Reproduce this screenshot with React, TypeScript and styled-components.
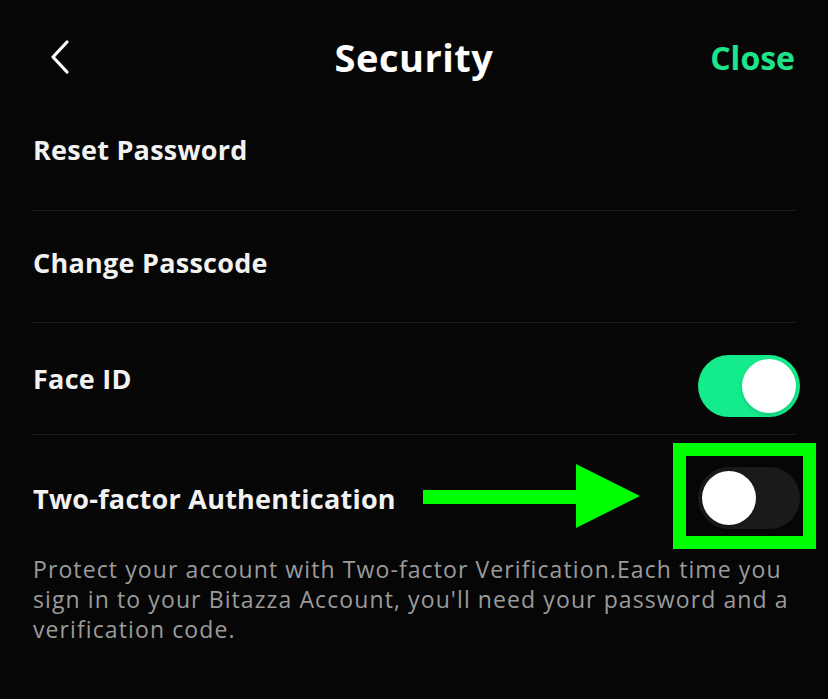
import React from "react";
import styled, { createGlobalStyle } from "styled-components";

const Global = createGlobalStyle`
  html, body { margin: 0; padding: 0; background: #060606; }
  body { font-family: "Open Sans", Lato, sans-serif; -webkit-font-smoothing: antialiased; }
`;

const Screen = styled.div`
  width: 828px;
  height: 699px;
  background: #060606;
  position: relative;
  overflow: hidden;
  color: #f4f4f4;
`;

const Header = styled.header`
  height: 98px;
  display: grid;
  grid-template-columns: 1fr auto 1fr;
  align-items: center;
  padding: 16px 33px 0 33px;
  box-sizing: border-box;
`;

const BackButton = styled.button`
  justify-self: start;
  margin-left: 17px;
  background: none;
  border: 0;
  padding: 0;
  width: 20px;
  height: 36px;
  display: flex;
  align-items: center;
  cursor: pointer;
`;

const Title = styled.h1`
  margin: 0;
  font-size: 38px;
  font-weight: 700;
  letter-spacing: 0.5px;
  color: #ffffff;
`;

const CloseLink = styled.button`
  justify-self: end;
  background: none;
  border: 0;
  padding: 0;
  font-family: inherit;
  font-size: 32px;
  font-weight: 700;
  color: #1de38b;
  cursor: pointer;
`;

const List = styled.div`
  padding: 0 32px;
`;

const Row = styled.div<{ $h: number; $last?: boolean; $pb?: number; $pt?: number }>`
  height: ${(p) => p.$h}px;
  box-sizing: border-box;
  display: flex;
  align-items: center;
  justify-content: space-between;
  padding-top: ${(p) => p.$pt ?? 0}px;
  padding-bottom: ${(p) => p.$pb ?? 0}px;
  border-bottom: ${(p) => (p.$last ? "none" : "1px solid #1b1b1b")};
`;

const RowLabel = styled.span`
  padding-left: 1px;
  font-size: 27px;
  font-weight: 700;
  letter-spacing: 0.25px;
  color: #f2f2f2;
`;

const Track = styled.div<{ $on: boolean; $shift?: number }>`
  width: 102px;
  height: 62px;
  border-radius: 31px;
  background: ${(p) => (p.$on ? "#14ec8c" : "#1a1a1a")};
  display: flex;
  align-items: center;
  justify-content: ${(p) => (p.$on ? "flex-end" : "flex-start")};
  padding: 0 4px;
  box-sizing: border-box;
  margin-right: -4px;
  margin-top: ${(p) => p.$shift ?? 0}px;
`;

const Knob = styled.div`
  width: 54px;
  height: 54px;
  border-radius: 50%;
  background: #ffffff;
  box-shadow: 0 2px 4px rgba(0, 0, 0, 0.15);
`;

const Description = styled.p`
  margin: 0;
  padding: 0 30px 0 33px;
  font-size: 23px;
  line-height: 30px;
  letter-spacing: 1.1px;
  color: #9b9b9b;
  font-weight: 400;
`;

const Highlight = styled.div`
  position: absolute;
  left: 673px;
  top: 443px;
  width: 143px;
  height: 106px;
  box-sizing: border-box;
  border: 13px solid #00ff00;
`;

const Arrow = styled.svg`
  position: absolute;
  left: 423px;
  top: 464px;
`;

const Toggle = ({ on, shift }: { on: boolean; shift?: number }) => (
  <Track $on={on} $shift={shift}>
    <Knob />
  </Track>
);

export default function App() {
  return (
    <Screen>
      <Global />
      <Header>
        <BackButton aria-label="Back">
          <svg width="20" height="36" viewBox="0 0 20 36">
            <path d="M17 3 L3 18 L17 33" fill="none" stroke="#ffffff" strokeWidth="3.2" strokeLinecap="round" strokeLinejoin="round" />
          </svg>
        </BackButton>
        <Title>Security</Title>
        <CloseLink>Close</CloseLink>
      </Header>
      <List>
        <Row $h={113} $pb={10}>
          <RowLabel>Reset Password</RowLabel>
        </Row>
        <Row $h={112} $pb={8}>
          <RowLabel>Change Passcode</RowLabel>
        </Row>
        <Row $h={112}>
          <RowLabel>Face ID</RowLabel>
          <Toggle on shift={15} />
        </Row>
        <Row $h={119} $pt={7} $last>
          <RowLabel>Two-factor Authentication</RowLabel>
          <Toggle on={false} />
        </Row>
      </List>
      <Description>
        Protect your account with Two-factor Verification.Each time you sign in to your Bitazza Account, you'll need your password and a verification code.
      </Description>
      <Highlight />
      <Arrow width="218" height="64" viewBox="0 0 218 64">
        <rect x="0" y="26" width="156" height="14" fill="#00ff00" />
        <polygon points="153,0 217,32 153,64" fill="#00ff00" />
      </Arrow>
    </Screen>
  );
}
